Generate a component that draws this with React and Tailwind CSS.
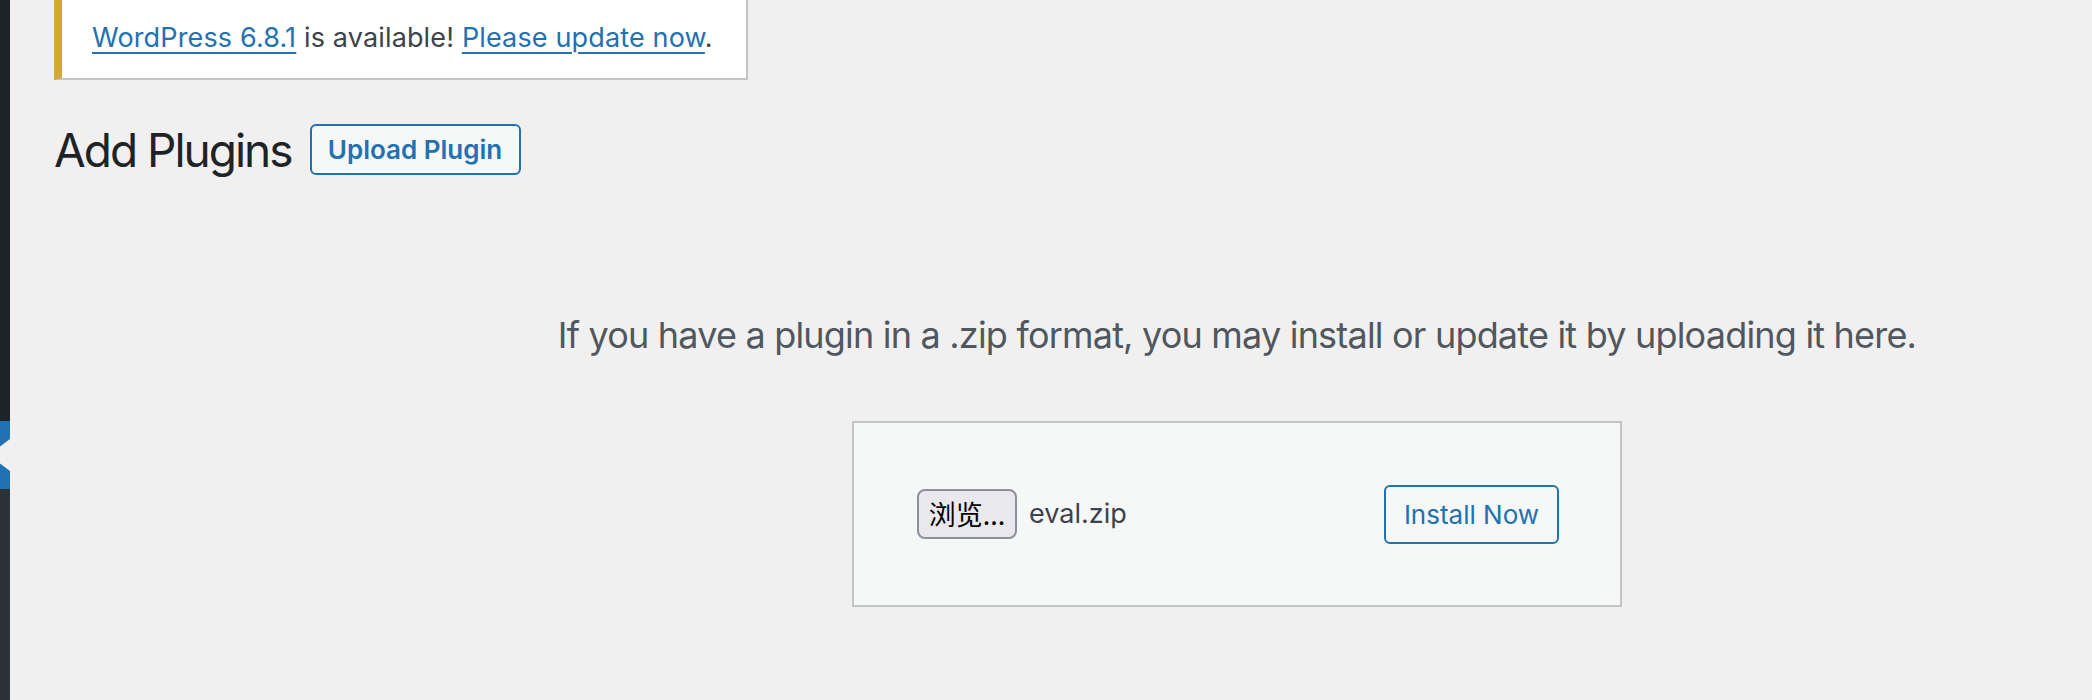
import React from "react";

const font = "font-['Inter','Liberation_Sans',sans-serif]";

const AdminMenuEdge = () => {
  return (
    <div className="flex w-[10px] shrink-0 flex-col overflow-hidden">
      <div className="h-[421px] bg-[#1d2327]" />
      <div className="relative h-[68px] bg-[#2271b1]">
        <svg className="absolute right-0 top-[18px]" width="21" height="32" viewBox="0 0 21 32">
          <polygon points="21,0 0,16 21,32" fill="#f0f0f1" />
        </svg>
      </div>
      <div className="flex-1 bg-[#2c3338]" />
    </div>
  );
};

const UpdateNotice = () => {
  return (
    <div className="h-[80px] w-[694px] border-b-2 border-l-[8px] border-r-2 border-b-[#c3c4c7] border-l-[#d4a93c] border-r-[#c3c4c7] bg-white pl-[30px] pt-[18px]">
      <p className="text-[27px] leading-[39px] tracking-[0.15px] text-[#3c434a]">
        <a href="#" className="text-[#2271b1] underline decoration-2 underline-offset-[5px]">
          WordPress 6.8.1
        </a>{" "}
        is available!{" "}
        <a href="#" className="text-[#2271b1] underline decoration-2 underline-offset-[5px]">
          Please update now
        </a>
        .
      </p>
    </div>
  );
};

const UploadForm = () => {
  return (
    <div className="flex h-[186px] w-[770px] items-center justify-between border-2 border-[#c3c4c7] bg-[#f6f7f7] pl-[63px] pr-[61px]">
      <div className="flex items-center gap-[12px]">
        <button className="flex h-[50px] w-[100px] items-center justify-center rounded-[8px] border-2 border-[#8f8f9d] bg-[#e9e9ed] font-['Noto_Sans_CJK_SC',sans-serif] text-[27px] text-black">
          浏览...
        </button>
        <span className="text-[27px] text-[#3c434a]">eval.zip</span>
      </div>
      <button className="flex h-[59px] w-[175px] items-center justify-center rounded-[6px] border-2 border-[#2271b1] text-[26px] text-[#2271b1]">
        Install Now
      </button>
    </div>
  );
};

export default function App() {
  return (
    <div className={`flex h-[700px] w-[2092px] overflow-hidden bg-[#f0f0f1] ${font}`}>
      <AdminMenuEdge />
      <div className="shrink-0 pl-[44px]">
        <div className="flex w-[2366px] flex-col">
          <UpdateNotice />
          <div className="mt-[44px] flex h-[51px] items-center gap-[18px]">
            <h1 className="text-[46px] font-normal leading-none tracking-[-2px] text-[#1d2327]">Add Plugins</h1>
            <button className="flex h-[51px] w-[211px] items-center justify-center rounded-[6px] border-2 border-[#2271b1] bg-[#f6f7f7] text-[26px] font-semibold text-[#2271b1]">
              Upload Plugin
            </button>
          </div>
          <p className="mt-[135px] h-[50px] text-center text-[36px] leading-[50px] tracking-[-0.8px] text-[#50575e]">
            If you have a plugin in a .zip format, you may install or update it by uploading it here.
          </p>
          <div className="mt-[61px] flex justify-center">
            <UploadForm />
          </div>
        </div>
      </div>
    </div>
  );
}
